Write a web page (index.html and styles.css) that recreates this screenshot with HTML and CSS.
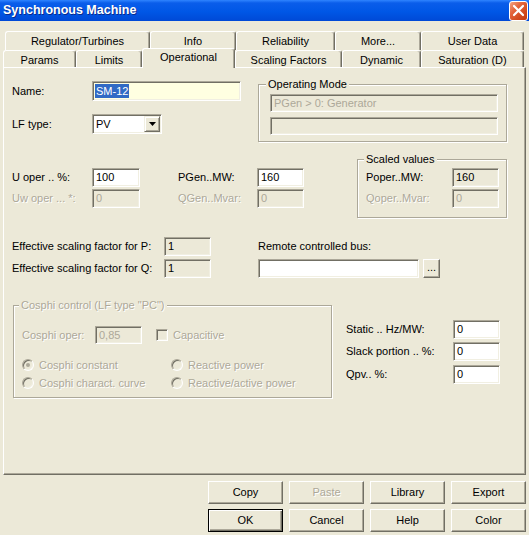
FILE: index.html
```html
<!DOCTYPE html>
<html>
<head>
<meta charset="utf-8">
<link rel="stylesheet" href="styles.css">
</head>
<body>
<div class="titlebar">
  <span class="title">Synchronous Machine</span>
  <div class="close"><svg width="13" height="13" viewBox="0 0 13 13"><path d="M2 2 L11 11 M11 2 L2 11" stroke="#fff" stroke-width="2.2" stroke-linecap="round"/></svg></div>
</div>
<div class="tabs">
  <div class="tabrow row1">
    <div class="tab w145">Regulator/Turbines</div>
    <div class="tab w86">Info</div>
    <div class="tab w99">Reliability</div>
    <div class="tab w86">More...</div>
    <div class="tab w103">User Data</div>
  </div>
  <div class="tabrow row2">
    <div class="tab w73">Params</div>
    <div class="tab w66">Limits</div>
    <div class="tab w93 sel">Operational</div>
    <div class="tab w107">Scaling Factors</div>
    <div class="tab w79">Dynamic</div>
    <div class="tab w103">Saturation (D)</div>
  </div>
</div>
<div class="panel">
  <div class="sec sec-a">
    <div class="col-a">
      <div class="frow h20">
        <span class="lbl w80">Name:</span>
        <div class="tb name w149 h20"><span class="hl">SM-12</span></div>
      </div>
      <div class="frow h20 mt13">
        <span class="lbl w80">LF type:</span>
        <div class="select">
          <span>PV</span>
          <div class="ddbtn"><svg width="7" height="4" viewBox="0 0 7 4"><path d="M0 0 H7 L3.5 4 Z" fill="#000"/></svg></div>
        </div>
      </div>
    </div>
    <fieldset class="grp opmode">
      <legend>Operating Mode</legend>
      <div class="tb dis-tb w228 h18 ml4">PGen &gt; 0: Generator</div>
      <div class="tb dis-tb w228 h18 ml4 mt5"></div>
    </fieldset>
  </div>

  <div class="sec sec-b">
    <div class="col-b">
      <div class="frow h19">
        <span class="lbl w80">U oper .. %:</span>
        <div class="tb w48 h19">100</div>
        <span class="lbl w79 ml38">PGen..MW:</span>
        <div class="tb w47 h19">160</div>
      </div>
      <div class="frow h19 mt2">
        <span class="lbl w80 dis">Uw oper ... *:</span>
        <div class="tb dis-tb w48 h19">0</div>
        <span class="lbl w79 ml38 dis">QGen..Mvar:</span>
        <div class="tb dis-tb w47 h19">0</div>
      </div>
    </div>
    <fieldset class="grp scaled">
      <legend>Scaled values</legend>
      <div class="frow h19 ml2">
        <span class="lbl w86">Poper..MW:</span>
        <div class="tb ro-tb w47 h19">160</div>
      </div>
      <div class="frow h19 ml2 mt2">
        <span class="lbl w86 dis">Qoper..Mvar:</span>
        <div class="tb dis-tb w47 h19">0</div>
      </div>
    </fieldset>
  </div>

  <div class="sec sec-c">
    <div class="col-c1">
      <div class="frow h19">
        <span class="lbl w152">Effective scaling factor for P:</span>
        <div class="tb ro-tb w47 h19">1</div>
      </div>
      <div class="frow h19 mt3">
        <span class="lbl w152">Effective scaling factor for Q:</span>
        <div class="tb ro-tb w47 h19">1</div>
      </div>
    </div>
    <div class="col-c2">
      <div class="lbl-line">Remote controlled bus:</div>
      <div class="frow h19 mt6">
        <div class="tb w161 h19"></div>
        <div class="btn small">...</div>
      </div>
    </div>
  </div>

  <div class="sec sec-d">
    <fieldset class="grp cosphi">
      <legend class="dis">Cosphi control (LF type "PC")</legend>
      <div class="frow h18">
        <span class="lbl w73 ml3 dis">Cosphi oper:</span>
        <div class="tb dis-tb w47 h18">0,85</div>
        <span class="cb"></span>
        <span class="dis ml5">Capacitive</span>
      </div>
      <div class="radios">
        <div class="ritem"><span class="radio on"></span><span class="dis">Cosphi constant</span></div>
        <div class="ritem"><span class="radio"></span><span class="dis">Reactive power</span></div>
        <div class="ritem"><span class="radio"></span><span class="dis">Cosphi charact. curve</span></div>
        <div class="ritem"><span class="radio"></span><span class="dis">Reactive/active power</span></div>
      </div>
    </fieldset>
    <div class="col-d2">
      <div class="frow h19">
        <span class="lbl w107">Static .. Hz/MW:</span>
        <div class="tb w47 h19">0</div>
      </div>
      <div class="frow h19">
        <span class="lbl w107">Slack portion .. %:</span>
        <div class="tb w47 h19">0</div>
      </div>
      <div class="frow h19 mt1">
        <span class="lbl w107">Qpv.. %:</span>
        <div class="tb w47 h19">0</div>
      </div>
    </div>
  </div>
</div>
<div class="buttons">
  <div class="btn">Copy</div>
  <div class="btn disabled">Paste</div>
  <div class="btn">Library</div>
  <div class="btn">Export</div>
  <div class="btn default">OK</div>
  <div class="btn">Cancel</div>
  <div class="btn">Help</div>
  <div class="btn">Color</div>
</div>
</body>
</html>
```

FILE: styles.css
```css
* { box-sizing: border-box; }
html, body { margin: 0; padding: 0; }
body {
  width: 529px;
  height: 535px;
  overflow: hidden;
  background: #ECE9D8;
  font-family: "Liberation Sans", Arial, sans-serif;
  font-size: 11px;
  line-height: 13px;
  color: #000;
}

/* title bar */
.titlebar {
  height: 21px;
  display: flex;
  align-items: center;
  justify-content: space-between;
  padding-left: 3px;
  background: linear-gradient(to bottom, #2F84FF 0, #0A5DEA 3px, #0057E6 55%, #0049D6 100%);
}
.title {
  color: #fff;
  font-weight: bold;
  font-size: 12.5px;
  letter-spacing: 0;
  text-shadow: 1px 1px 0 #0A2B8C;
}
.close {
  width: 19px;
  height: 20px;
  margin-right: 1px;
  border: 1px solid #fff;
  border-radius: 3px;
  background: linear-gradient(135deg, #F3A585 0%, #E4663D 35%, #D24A1E 70%, #C23A12 100%);
  display: flex;
  align-items: center;
  justify-content: center;
}

/* tabs */
.tabs { padding-top: 10px; }
.tabrow { display: flex; }
.row1 { padding-left: 5px; height: 19px; }
.row2 {
  padding-left: 3px;
  height: 19px;
  margin-top: -2px;
  align-items: flex-end;
  position: relative;
  z-index: 1;
}
.tab {
  height: 19px;
  background: #ECE9D8;
  border-top: 1px solid #fff;
  border-left: 1px solid #fff;
  border-right: 1px solid #716F64;
  box-shadow: inset -1px 0 0 #ACA899;
  border-radius: 3px 3px 0 0;
  text-align: center;
  padding-top: 3px;
  white-space: nowrap;
}
.row2 .tab { height: 17px; }
.row2 .tab.sel { height: 20px; margin-bottom: -1px; padding-top: 2px; }

.w145 { width: 145px; } .w86 { width: 86px; } .w99 { width: 99px; } .w103 { width: 103px; }
.w73 { width: 73px; } .w66 { width: 66px; } .w93 { width: 93px; } .w107 { width: 107px; }
.w79 { width: 79px; } .w80 { width: 80px; } .w149 { width: 149px; } .w228 { width: 228px; }
.w48 { width: 48px; } .w47 { width: 47px; } .w152 { width: 152px; } .w161 { width: 161px; }
.h20 { height: 20px; } .h19 { height: 19px; } .h18 { height: 18px; }
.mt1 { margin-top: 1px; } .mt2 { margin-top: 2px; } .mt3 { margin-top: 3px; } .mt5 { margin-top: 5px; }
.mt6 { margin-top: 6px; } .mt13 { margin-top: 13px; }
.ml2 { margin-left: 2px; } .ml3 { margin-left: 3px; } .ml4 { margin-left: 4px; } .ml5 { margin-left: 5px; }
.ml38 { margin-left: 38px; }

/* panel */
.panel {
  margin-left: 3px;
  width: 523px;
  height: 408px;
  border-top: 1px solid #fff;
  border-left: 1px solid #fff;
  border-right: 1px solid #716F64;
  border-bottom: 1px solid #716F64;
  box-shadow: inset -1px -1px 0 #ACA899;
}
.sec { display: flex; padding-left: 8px; }
.sec-a { margin-top: 10px; }
.sec-b { margin-top: 11px; }
.sec-c { margin-top: 19px; }
.sec-d { margin-top: 21px; }

.frow { display: flex; align-items: center; }
.lbl { flex: none; white-space: nowrap; }
.dis { color: #ACA899; text-shadow: 1px 1px 0 #fff; }

/* text boxes */
.tb {
  flex: none;
  background: #fff;
  border: 1px solid;
  border-color: #ACA899 #fff #fff #ACA899;
  box-shadow: inset 1px 1px 0 #716F64, inset -1px -1px 0 #F1EFE2;
  padding: 0 3px;
  display: flex;
  align-items: center;
  white-space: nowrap;
  overflow: hidden;
}
.dis-tb { background: #ECE9D8; color: #ACA899; }
.ro-tb { background: #ECE9D8; }
.name { background: #FFFFE1; padding-left: 2px; }
.hl { background: #316AC5; color: #fff; padding: 0 1px; line-height: 14px; }

.select {
  width: 70px;
  height: 20px;
  background: #fff;
  border: 1px solid;
  border-color: #ACA899 #fff #fff #ACA899;
  box-shadow: inset 1px 1px 0 #716F64, inset -1px -1px 0 #F1EFE2;
  display: flex;
  align-items: center;
  justify-content: space-between;
  padding: 0 1px 0 3px;
}
.ddbtn {
  width: 16px;
  height: 16px;
  background: #ECE9D8;
  border-top: 1px solid #F1EFE2;
  border-left: 1px solid #F1EFE2;
  border-right: 1px solid #716F64;
  border-bottom: 1px solid #716F64;
  box-shadow: inset 1px 1px 0 #fff, inset -1px -1px 0 #ACA899;
  display: flex;
  align-items: center;
  justify-content: center;
}

/* group boxes */
.grp {
  margin: 0;
  border: 1px solid #ACA899;
  box-shadow: inset 1px 1px 0 #fff, 1px 1px 0 #fff;
  min-width: 0;
}
.grp legend {
  padding: 0 2px;
  line-height: 13px;
  background: #ECE9D8;
}
.col-a { width: 246px; padding-top: 3px; }
.opmode { width: 249px; padding: 3px 0 6px 7px; }

.col-b { width: 345px; padding-top: 15px; }
.scaled { width: 150px; padding: 2px 0 9px 6px; }
.w86 { width: 86px; }

.col-c1 { width: 246px; }
.col-c2 { padding-top: 3px; }
.col-c2 .frow { margin-top: 6px; }
.lbl-line { line-height: 13px; }

.cosphi { width: 319px; margin-left: 1px; padding: 14px 0 5px 5px; }
.w73 { width: 73px; }
.cb {
  width: 12px;
  height: 12px;
  margin-left: 14px;
  background: #ECE9D8;
  border: 1px solid;
  border-color: #ACA899 #fff #fff #ACA899;
  box-shadow: inset 1px 1px 0 #716F64, inset -1px -1px 0 #F1EFE2;
}
.radios {
  margin-top: 12px;
  margin-left: 3px;
  display: grid;
  grid-template-columns: 149px auto;
  grid-auto-rows: 18px;
}
.ritem { display: flex; align-items: center; white-space: nowrap; }
.radio {
  width: 12px;
  height: 12px;
  margin-right: 5px;
  border-radius: 50%;
  border: 1px solid;
  border-color: #ACA899 #fff #fff #ACA899;
  box-shadow: inset 1px 1px 0 #716F64, inset -1px -1px 0 #F1EFE2;
  background: #ECE9D8;
  display: flex;
  align-items: center;
  justify-content: center;
}
.radio.on::after {
  content: "";
  width: 4px;
  height: 4px;
  border-radius: 50%;
  background: #ACA899;
}

.col-d2 {
  margin-left: 14px;
  padding-top: 21px;
  display: flex;
  flex-direction: column;
  gap: 3px;
}

/* buttons */
.btn {
  background: #ECE9D8;
  border-top: 1px solid #fff;
  border-left: 1px solid #fff;
  border-right: 1px solid #716F64;
  border-bottom: 1px solid #716F64;
  box-shadow: inset -1px -1px 0 #ACA899;
  display: flex;
  align-items: center;
  justify-content: center;
  white-space: nowrap;
}
.btn.small { width: 17px; height: 19px; margin-left: 4px; padding-bottom: 3px; align-items: flex-end; }
.btn.disabled { color: #ACA899; text-shadow: 1px 1px 0 #fff; }
.btn.default {
  border: 1px solid #000;
  box-shadow: inset 1px 1px 0 #fff, inset -1px -1px 0 #716F64, inset -2px -2px 0 #ACA899;
}
.buttons {
  display: grid;
  grid-template-columns: repeat(4, 75px);
  grid-auto-rows: 23px;
  column-gap: 6px;
  row-gap: 5px;
  margin: 6px 0 0 208px;
}
```
